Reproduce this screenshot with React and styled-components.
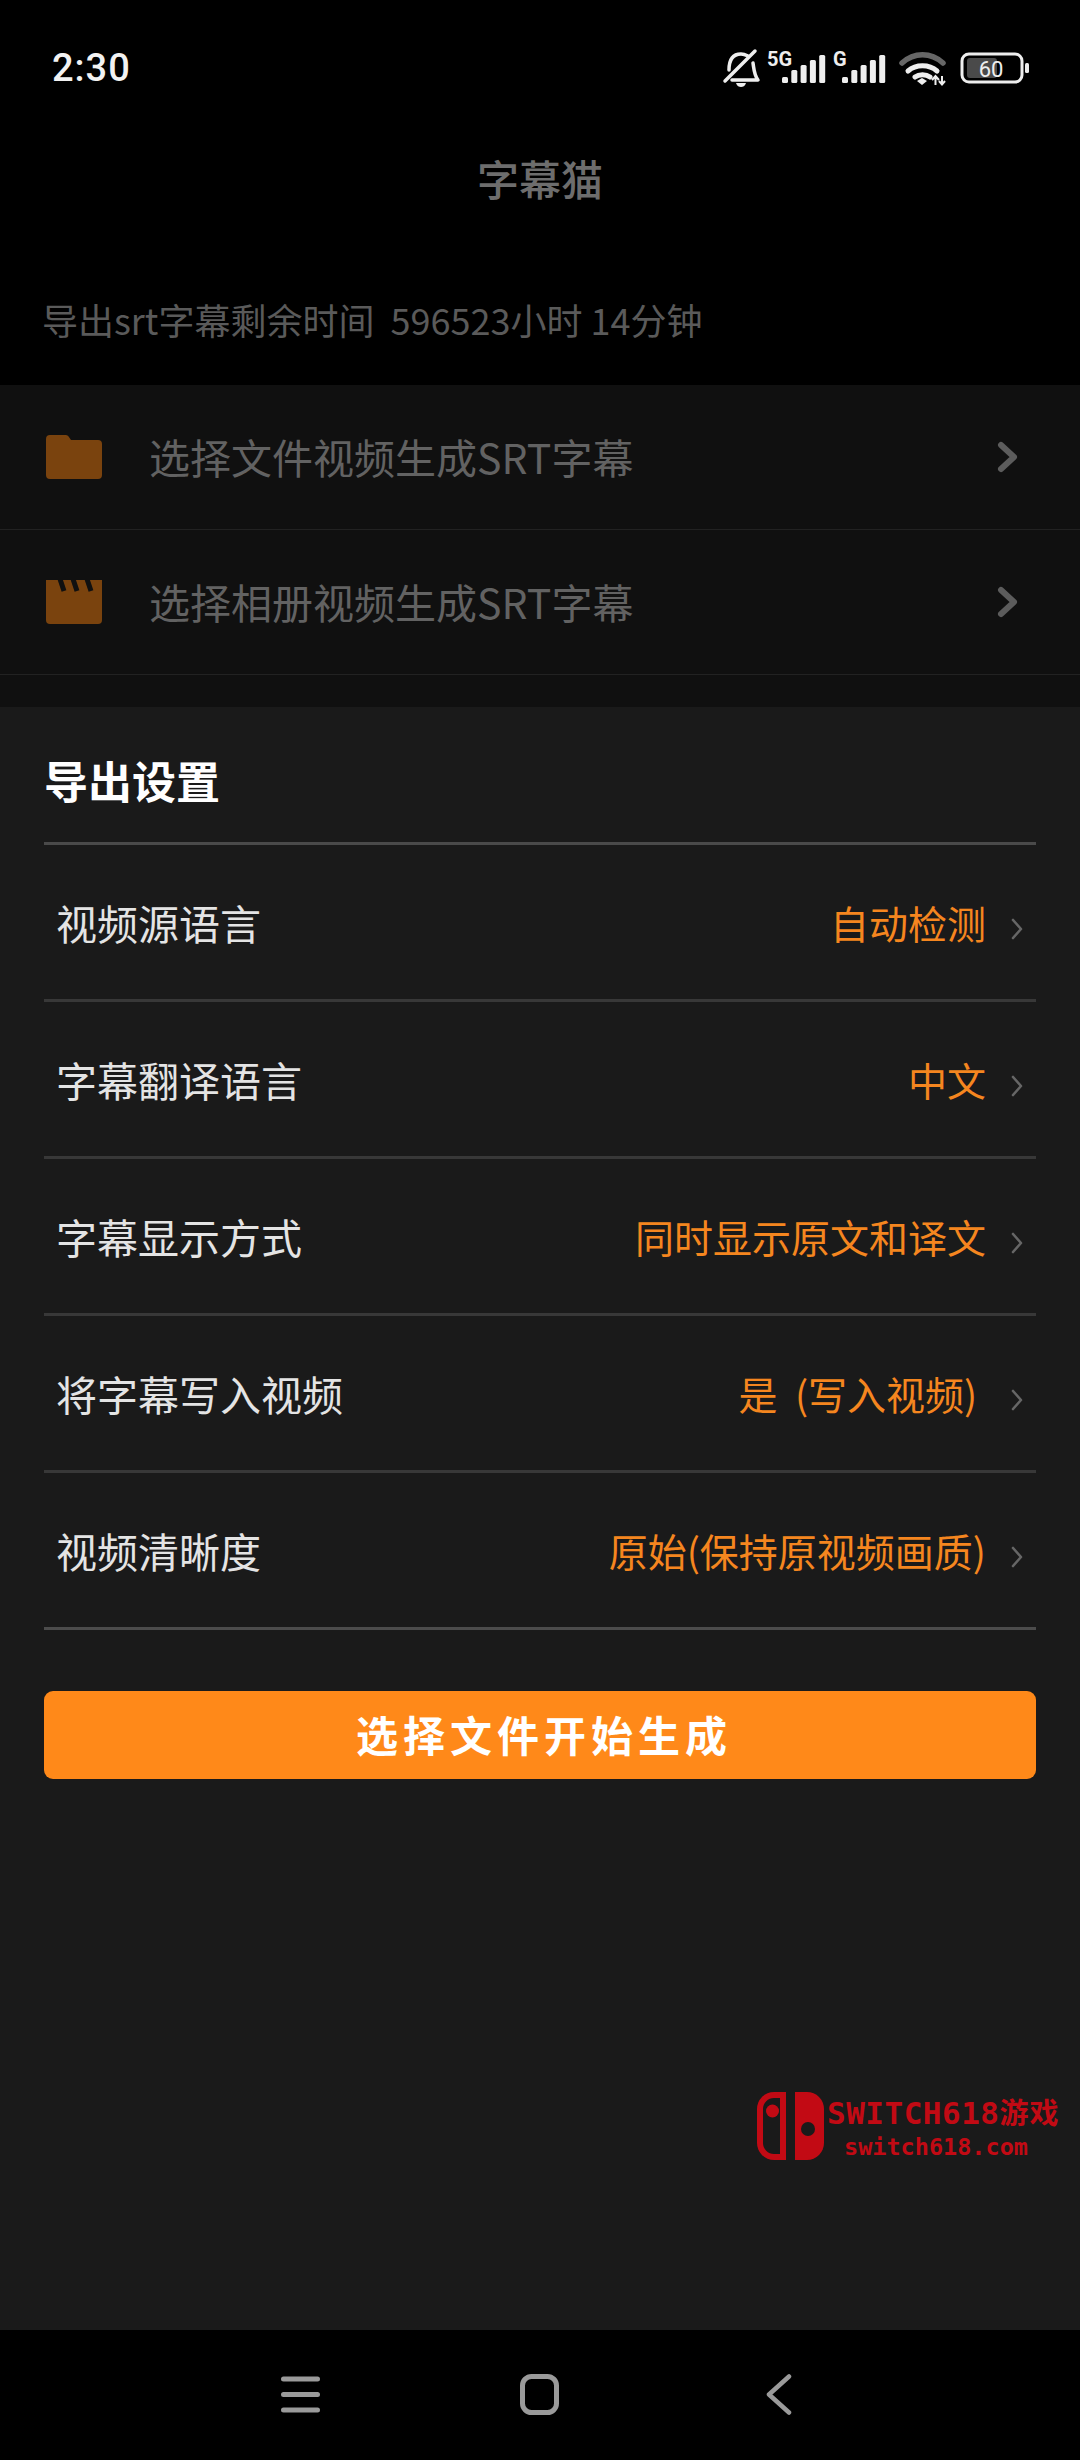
import React from 'react';
import styled, { createGlobalStyle } from 'styled-components';

const FONT = '"Noto Sans CJK SC", "Noto Sans", sans-serif';

const GlobalStyle = createGlobalStyle`
  html, body { margin: 0; padding: 0; background: #000; }
  * { box-sizing: border-box; }
`;

const Page = styled.div`
  position: relative;
  width: 1080px;
  height: 2460px;
  display: flex;
  flex-direction: column;
  background: #000;
  font-family: ${FONT};
  overflow: hidden;
`;

const StatusBar = styled.div`
  height: 136px;
  padding: 0 51px 0 52px;
  display: flex;
  justify-content: space-between;
  align-items: flex-start;
  color: #f2f2f2;
`;

const Clock = styled.div`
  margin-top: 46px;
  font-family: Roboto, sans-serif;
  font-size: 38px;
  line-height: 44px;
  font-weight: 500;
  letter-spacing: 1px;
`;

const StatusIcons = styled.svg`
  margin-top: 46px;
  flex: none;
`;

const Title = styled.div`
  height: 84px;
  text-align: center;
  font-size: 42px;
  line-height: 84px;
  font-weight: 500;
  color: #6d6d6d;
`;

const Info = styled.div`
  height: 165px;
  padding: 76px 0 0 42px;
  font-size: 36px;
  line-height: 46px;
  color: #5a5a5a;
  white-space: pre;
`;

const FileList = styled.div`
  height: 322px;
  background: #101010;
`;

const FileRow = styled.div`
  height: 145px;
  padding: 0 60px 0 46px;
  display: flex;
  align-items: center;
  border-bottom: 1px solid #222;
`;

const FileIcon = styled.svg`
  flex: none;
  width: 56px;
  height: 44px;
  margin-right: 47px;
`;

const FileLabel = styled.div`
  flex: 1;
  margin-bottom: 2px;
  font-size: 41px;
  color: #626262;
`;

const RowArrow = styled.svg`
  flex: none;
  width: 24px;
  height: 36px;
`;

const Sheet = styled.div`
  flex: 1;
  padding: 0 44px;
  background: #1a1a1a;
`;

const SheetTitle = styled.div`
  height: 138px;
  padding-top: 43px;
  font-size: 44px;
  line-height: 60px;
  font-weight: 700;
  color: #fff;
  border-bottom: 3px solid #4a4a4a;
`;

const SettingRow = styled.div`
  height: 157px;
  padding: 0 13px 0 12px;
  display: flex;
  align-items: center;
  border-bottom: 3px solid #383838;
  &:last-of-type { border-bottom-color: #4c4c4c; }
`;

const SettingLabel = styled.div`
  flex: 1;
  font-size: 41px;
  color: #e4e4e4;
`;

const SettingValue = styled.div`
  font-size: 39px;
  color: #f5861f;
  white-space: pre;
`;

const SettingArrow = styled.svg`
  flex: none;
  width: 12px;
  height: 22px;
  margin: 14px 0 0 25px;
`;

const StartButton = styled.button`
  display: block;
  width: 100%;
  height: 88px;
  margin-top: 61px;
  padding: 0 0 3px 8px;
  border: 0;
  border-radius: 9px;
  background: #ff8919;
  color: #fff;
  font-family: ${FONT};
  font-size: 42px;
  font-weight: 700;
  letter-spacing: 5px;
`;

const Watermark = styled.div`
  position: absolute;
  left: 757px;
  top: 2092px;
  width: 310px;
  height: 70px;
  color: #c20a14;
  display: flex;
`;

const MarkLogo = styled.svg`
  flex: none;
  width: 67px;
  height: 68px;
`;

const MarkText = styled.div`
  margin-left: 3px;
  display: flex;
  flex-direction: column;
  font-family: "DejaVu Sans Mono", monospace;
  font-weight: 700;
`;

const MarkName = styled.div`
  font-size: 31px;
  line-height: 38px;
  letter-spacing: 0.5px;
  white-space: nowrap;
  span { font-family: ${FONT}; font-size: 29px; letter-spacing: 1px; }
`;

const MarkUrl = styled.div`
  margin: 0 0 0 17px;
  font-size: 23.5px;
  line-height: 30px;
  white-space: nowrap;
`;

const NavBar = styled.div`
  height: 130px;
  flex: none;
  background: #000;
  display: grid;
  grid-template-columns: 281px 39px 200px 39px 207px 26px;
  padding-top: 44px;
  align-items: start;
`;

const NavIcon = styled.svg`
  display: block;
  grid-column: ${p => p.$col};
`;

const settings = [
  ['视频源语言', '自动检测'],
  ['字幕翻译语言', '中文'],
  ['字幕显示方式', '同时显示原文和译文'],
  ['将字幕写入视频', '是  (写入视频) '],
  ['视频清晰度', '原始(保持原视频画质)'],
];

const FolderGlyph = () => (
  <FileIcon viewBox="0 0 56 44">
    <path d="M0 4a4 4 0 0 1 4-4h16a3 3 0 0 1 2.600 1.500L25 5h27a4 4 0 0 1 4 4v31a4 4 0 0 1-4 4H4a4 4 0 0 1-4-4z" fill="#7a430e" />
  </FileIcon>
);

const ClapGlyph = () => (
  <FileIcon viewBox="0 0 56 44">
    <path d="M0 0h56v40a4 4 0 0 1-4 4H4a4 4 0 0 1-4-4z" fill="#7a430e" />
    <path d="M14 -1l4 12M27 -1l4 12M41 -1l4 12" stroke="#101010" strokeWidth="5" fill="none" />
  </FileIcon>
);

const Arrow = () => (
  <RowArrow viewBox="0 0 24 36">
    <path d="M5 6l13 12L5 30" fill="none" stroke="#5c5c5c" strokeWidth="6" strokeLinecap="round" strokeLinejoin="round" />
  </RowArrow>
);

const BAR_TOPS = [31, 24, 19, 14, 9];

const Bars = ({ x }) => (
  <g fill="#eee">
    {BAR_TOPS.map((top, i) => (
      <rect key={top} x={x + i * 9.3} y={top} width="6" height={37 - top} rx="1.500" />
    ))}
  </g>
);

const StatusGlyphs = () => (
  <StatusIcons width="308" height="46" viewBox="0 0 308 46">
    <g fill="none" stroke="#eee" strokeWidth="3.500" strokeLinecap="round" strokeLinejoin="round">
      <path d="M8 24c0-10 4-16 12-16 3 0 5 1 7 2M32 17c1 6 1 12 5 17H11" />
      <path d="M4 35L34 5" />
    </g>
    <path d="M15 37h10c-1 3-3 4-5 4s-4-1-5-4z" fill="#eee" />
    <text x="46" y="20" fontFamily="Roboto, sans-serif" fontWeight="700" fontSize="20" fill="#eee">5G</text>
    <Bars x={61} />
    <text x="112" y="20" fontFamily="Roboto, sans-serif" fontWeight="700" fontSize="20" fill="#eee">G</text>
    <Bars x={121} />
    <g fill="none" strokeLinecap="round">
      <path d="M181 17c12-11 29-11 41 0" stroke="#666" strokeWidth="5.500" />
      <path d="M187 25c8-7 21-7 29 0" stroke="#eee" strokeWidth="5" />
      <path d="M194 31c4-3 11-3 15 0" stroke="#eee" strokeWidth="5" />
    </g>
    <path d="M196 35l5-3 5 3-5 4z" fill="#eee" />
    <path d="M211 34l3.500-4 3.500 4M214.500 31v8M218 35l3 3.500 3-3.500M221 38v-8" fill="none" stroke="#eee" strokeWidth="2" />
    <rect x="241" y="8" width="60" height="28" rx="7" fill="none" stroke="#eee" strokeWidth="3" />
    <rect x="246" y="12" width="30" height="20" rx="3" fill="#4a4a4a" />
    <text x="270" y="31" textAnchor="middle" fontFamily="Roboto, sans-serif" fontSize="22" fill="#eee">60</text>
    <rect x="304" y="17" width="4" height="10" rx="1.500" fill="#eee" />
  </StatusIcons>
);

const App = () => (
  <Page>
    <GlobalStyle />
    <StatusBar>
      <Clock>2:30</Clock>
      <StatusGlyphs />
    </StatusBar>
    <Title>字幕猫</Title>
    <Info>导出srt字幕剩余时间  596523小时 14分钟</Info>
    <FileList>
      <FileRow>
        <FolderGlyph />
        <FileLabel>选择文件视频生成SRT字幕</FileLabel>
        <Arrow />
      </FileRow>
      <FileRow>
        <ClapGlyph />
        <FileLabel>选择相册视频生成SRT字幕</FileLabel>
        <Arrow />
      </FileRow>
    </FileList>
    <Sheet>
      <SheetTitle>导出设置</SheetTitle>
      {settings.map(([label, value]) => (
        <SettingRow key={label}>
          <SettingLabel>{label}</SettingLabel>
          <SettingValue>{value}</SettingValue>
          <SettingArrow viewBox="0 0 12 22">
            <path d="M2 2l8 9-8 9" fill="none" stroke="#666" strokeWidth="2.600" strokeLinecap="round" strokeLinejoin="round" />
          </SettingArrow>
        </SettingRow>
      ))}
      <StartButton>选择文件开始生成</StartButton>
    </Sheet>
    <NavBar>
      <NavIcon $col={2} width="39" height="41" viewBox="0 0 39 41">
        <g stroke="#9a9a9a" strokeWidth="5" strokeLinecap="round">
          <path d="M2.500 5h34M2.500 20.500h34M2.500 36h34" />
        </g>
      </NavIcon>
      <NavIcon $col={4} width="39" height="41" viewBox="0 0 39 41">
        <rect x="2.500" y="2.500" width="34" height="36" rx="9" fill="none" stroke="#9a9a9a" strokeWidth="5" />
      </NavIcon>
      <NavIcon $col={6} width="26" height="41" viewBox="0 0 26 41">
        <path d="M23 2.500L3 20.500l20 18" fill="none" stroke="#9a9a9a" strokeWidth="4.500" strokeLinecap="round" strokeLinejoin="round" />
      </NavIcon>
    </NavBar>
    <Watermark>
      <MarkLogo viewBox="0 0 67 68">
        <path d="M29 0v68H17A17 17 0 0 1 0 51V17A17 17 0 0 1 17 0zM23 6h-6A11 11 0 0 0 6 17v34a11 11 0 0 0 11 11h6z" fill="currentColor" fillRule="evenodd" />
        <circle cx="15.500" cy="19" r="6.500" fill="currentColor" />
        <path d="M38 0h12a17 17 0 0 1 17 17v34a17 17 0 0 1-17 17H38z" fill="currentColor" />
        <circle cx="51" cy="37" r="7" fill="#1a1a1a" />
      </MarkLogo>
      <MarkText>
        <MarkName>SWITCH618<span>游戏</span></MarkName>
        <MarkUrl>switch618.com</MarkUrl>
      </MarkText>
    </Watermark>
  </Page>
);

export default App;
